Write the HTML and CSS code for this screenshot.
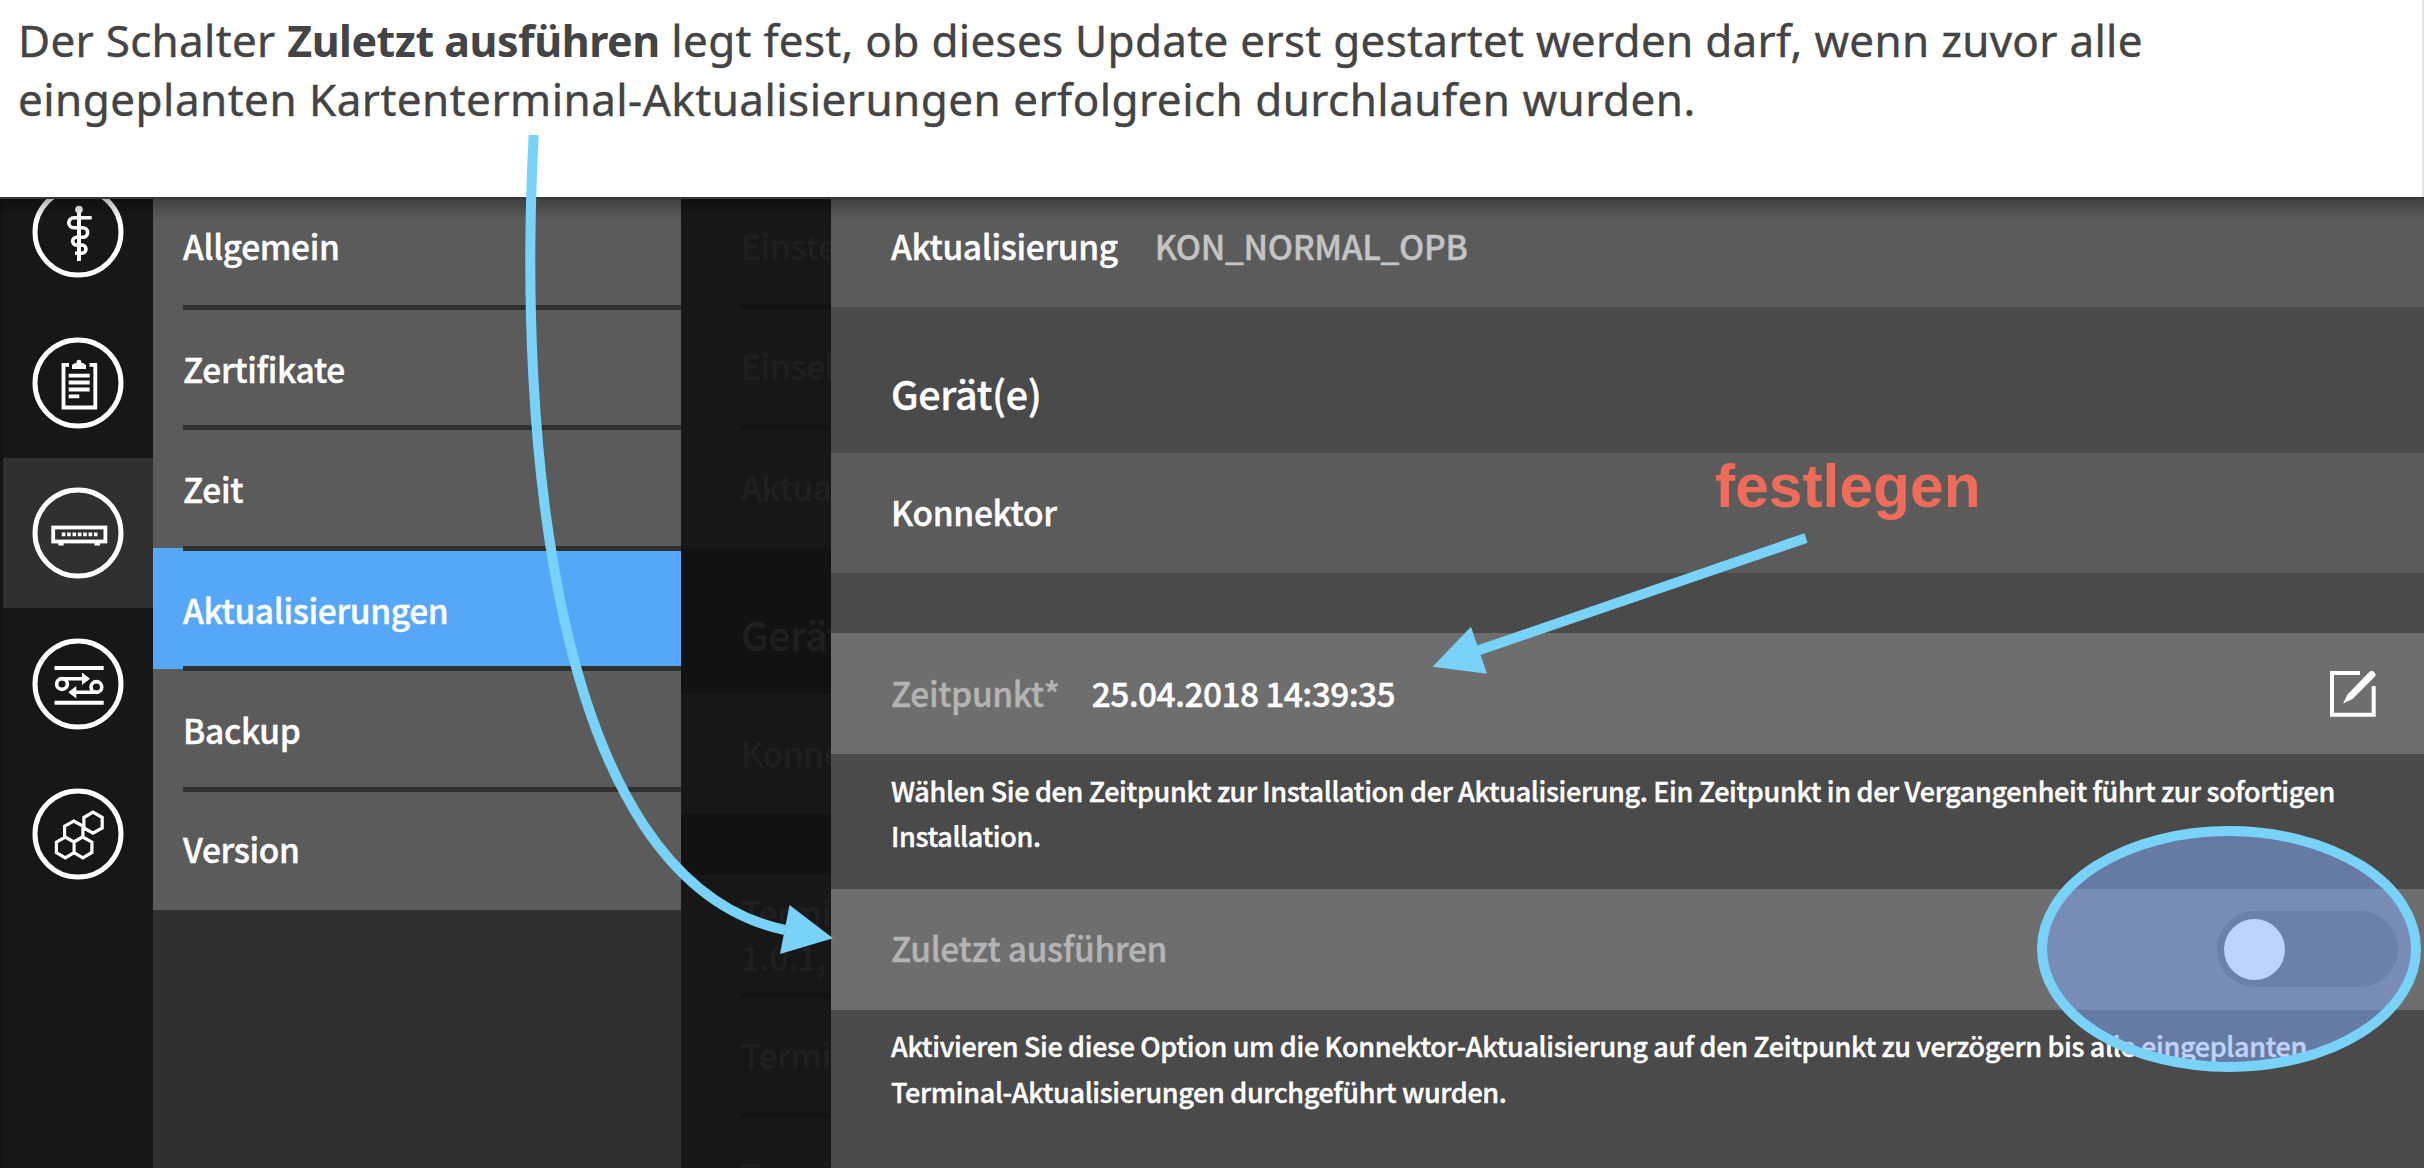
FILE: index.html
```html
<!DOCTYPE html>
<html lang="de">
<head>
<meta charset="utf-8">
<title>Aktualisierungen</title>
<link rel="stylesheet" href="styles.css">
</head>
<body>
<div class="page">
  <header class="intro">
    <p><span class="lead">Der Schalter <strong>Zuletzt ausführen</strong> legt fest, ob dieses Update erst gestartet werden darf, wenn zuvor alle</span><br>eingeplanten Kartenterminal-Aktualisierungen erfolgreich durchlaufen wurden.</p>
  </header>

  <div class="app">
    <nav class="rail">
      <a class="rail-item">
        <svg class="icon" viewBox="-46 -46 92 92"><circle r="43" stroke-width="5"/><circle class="solid" cx="1" cy="-22.5" r="3.8"/><path d="M1-21V29" stroke-width="4"/><path d="M13.7-14.3H-4.2A5 5 0 0 0-4.2-4.3H4.8A4.8 4.8 0 0 1 4.8 5.3H-1.5A3.85 3.85 0 0 0-1.5 13H3.9A4.1 4.1 0 0 1 3.9 21.2H-3" stroke-width="3.6"/></svg>
      </a>
      <a class="rail-item">
        <svg class="icon" viewBox="-46 -46 92 92"><circle r="43" stroke-width="5"/><path d="M-9-18.2H-14.5V24.5H17.3V-18.2H11.5M-9.3-7.3H11.7M-9.3-.5H11.7M-9.3 6.5H11.7M-9.3 13.3H1.3" stroke-width="3.8"/><path class="solid" d="M-6-14V-18L-3-20H-1.5Q-1.5-23.2 1-23.2T3.5-20H5L8-18V-14Z"/></svg>
      </a>
      <a class="rail-item active">
        <svg class="icon" viewBox="-46 -46 92 92"><circle r="43" stroke-width="5"/><rect x="-24.8" y="-5.5" width="52.2" height="14" stroke-width="3.8"/><path d="M-16.2 1.4H20" stroke-width="3.8" stroke-dasharray="3.6 1.75"/><path d="M-19.7 11.2H-14.3M16.5 11.2H22" stroke-width="2.5"/></svg>
      </a>
      <a class="rail-item">
        <svg class="icon" viewBox="-46 -46 92 92"><circle r="43" stroke-width="5"/><path d="M-23.5-16H25.7M-23.5 18.7H25.7" stroke-width="4"/><circle cx="-16" cy="0" r="5.4" stroke-width="3.6"/><circle cx="18.4" cy="3" r="5.4" stroke-width="3.6"/><path d="M-16-5.3H5M18.4 8.3H-3" stroke-width="3.6"/><path class="solid" d="M4-11.5 12-5.3 4 1ZM-1.7 2-9.7 8.3-1.7 14.6Z"/></svg>
      </a>
      <a class="rail-item">
        <svg class="icon" viewBox="-46 -46 92 92"><circle r="43" stroke-width="5"/><path d="M15-21.8 24.2-16.5V-6L15-.8 5.9-6V-16.5ZM-4.3-13 4.9-7.8V2.6L-4.3 8-13.4 2.6V-7.8ZM-12.7 3-3.9 8.2V18.5L-12.7 23.8-21.6 18.5V8.2ZM4.8 3 13.9 8.2V18.5L4.8 23.8-3.9 18.5V8.2Z" stroke-width="3.2"/></svg>
      </a>
    </nav>

    <nav class="menu">
      <a class="menu-item">Allgemein</a>
      <a class="menu-item">Zertifikate</a>
      <a class="menu-item">Zeit</a>
      <a class="menu-item active">Aktualisierungen</a>
      <a class="menu-item">Backup</a>
      <a class="menu-item">Version</a>
    </nav>

    <section class="dimmed">
      <div class="dim-row ruled">Einste</div>
      <div class="dim-row ruled">Einsel</div>
      <div class="dim-row">Aktua</div>
      <div class="dim-title">Gerät</div>
      <div class="dim-row">Konne</div>
      <div class="dim-gap"></div>
      <div class="dim-row ruled">Termi<br>1.0.1,</div>
      <div class="dim-row ruled">Termi</div>
      <div class="dim-row">Termi</div>
    </section>

    <main class="detail">
      <div class="row head"><span>Aktualisierung</span><span class="muted">KON_NORMAL_OPB</span></div>
      <h2 class="title">Gerät(e)</h2>
      <div class="row">Konnektor</div>
      <div class="gap"></div>
      <div class="row field">
        <span class="label">Zeitpunkt*</span><span>25.04.2018 14:39:35</span>
        <svg class="edit" viewBox="0 -2 48 48"><path d="M30 2H2V43.7H43.7V15" fill="none" stroke="#fff" stroke-width="4"/><path d="M13 32.5 17.5 23.5 39.5.8Q41.5-1 43.3.5L45 2.2Q46.5 4 44.7 5.8L22.5 28Z" fill="#fff"/></svg>
      </div>
      <p class="hint">Wählen Sie den Zeitpunkt zur Installation der Aktualisierung. Ein Zeitpunkt in der Vergangenheit führt zur sofortigen<br>Installation.</p>
      <div class="row field">
        <span class="label">Zuletzt ausführen</span>
        <span class="toggle"><span class="knob"></span></span>
      </div>
      <p class="hint">Aktivieren Sie diese Option um die Konnektor-Aktualisierung auf den Zeitpunkt zu verzögern bis alle eingeplanten<br>Terminal-Aktualisierungen durchgeführt wurden.</p>
    </main>
  </div>

  <svg class="annotations" viewBox="0 0 2424 1168">
    <path d="M533.7 135C518 430 550 880 785 930" fill="none" stroke="#79d3f9" stroke-width="10"/>
    <path d="M833 938.3 789.5 905 780 954Z" fill="#79d3f9"/>
    <path d="M1806 538 1478 650.5" fill="none" stroke="#79d3f9" stroke-width="10"/>
    <path d="M1432.6 666.7 1471 626.7 1487 673.7Z" fill="#79d3f9"/>
    <ellipse cx="2229" cy="949" rx="187" ry="118" fill="rgb(129 168 252 / .51)" stroke="#79d3f9" stroke-width="10"/>
  </svg>
  <div class="note">festlegen</div>
</div>
</body>
</html>
```
FILE: styles.css
```css
* { box-sizing: border-box; }

body {
  margin: 0;
  background: #fff;
}

.page {
  position: relative;
  display: flex;
  flex-direction: column;
  width: 2424px;
  height: 1168px;
  overflow: hidden;
}

.intro {
  flex: none;
  height: 197px;
  padding: 11px 0 0 18px;
  border-right: 2px solid #e2e2e2;
  color: #444;
  font: 44px/59px "Noto Sans", sans-serif;
  letter-spacing: .47px;
  white-space: nowrap;
  -webkit-text-stroke: .4px;
}

.intro p { margin: 0; }

.lead { letter-spacing: .3px; }

.intro strong {
  font-size: 43px;
  letter-spacing: -.5px;
  -webkit-text-stroke: 0;
}

.app {
  position: relative;
  isolation: isolate;
  flex: 1;
  display: flex;
  overflow: hidden;
  border-top: 2px solid #363837;
  background: #171717;
  color: #fff;
  font: 500 33.5px/45.2px "Noto Sans CJK SC", sans-serif;
  letter-spacing: -.34px;
  white-space: nowrap;
  -webkit-text-stroke: .4px;
}

.app::after {
  content: "";
  position: absolute;
  inset: 0 0 auto;
  height: 20px;
  background: linear-gradient(rgb(0 0 0 / .3), rgb(0 0 0 / 0));
}

.rail {
  flex: none;
  width: 153px;
  height: 1014px;
  margin-top: -42.4px;
  border-left: 3px solid #131313;
}

.rail-item {
  display: flex;
  justify-content: center;
  align-items: center;
  height: 150.6px;
}

.rail-item.active { background: #303030; }

.icon {
  width: 92px;
  height: 92px;
  fill: none;
  stroke: #fff;
}

.icon .solid {
  fill: #fff;
  stroke: none;
}

.menu {
  flex: none;
  width: 528px;
  height: 982px;
  margin-top: -12.4px;
  background: #303030;
}

.menu-item {
  position: relative;
  display: flex;
  align-items: center;
  height: 120.5px;
  padding: 2px 0 0 30px;
  background: #5b5b5b;
}

.menu-item:first-child,
.menu-item:last-child { padding: 0 0 2px 30px; }

.menu-item.active { background: #57a7f9; }

.menu-item:not(:last-child)::after,
.ruled::after {
  content: "";
  position: absolute;
  z-index: 1;
  inset: auto 0 -2.5px 30px;
  height: 5px;
  background: #303030;
}

.dimmed {
  flex: none;
  width: 150px;
  margin-top: -12.4px;
  overflow: hidden;
  background: #121212;
  color: #1f1f1f;
}

.dim-row {
  position: relative;
  display: flex;
  align-items: center;
  height: 120.3px;
  padding: 0 0 2px 60px;
  background: #171717;
}

.dimmed .ruled::after {
  left: 60px;
  background: #121212;
}

.dim-title {
  height: 146px;
  padding: 63px 0 0 60px;
  font-size: 39.5px;
}

.dim-gap { height: 61.5px; }

.detail {
  flex: 1;
  min-width: 0;
  margin-top: -12.4px;
  background: #4a4a4a;
}

.row {
  display: flex;
  align-items: center;
  height: 120.4px;
  padding: 0 26px 3px 60px;
  background: #5b5b5b;
}

.head { gap: 37px; }

.muted { color: #c4c4c4; }

.title {
  height: 145.6px;
  margin: 0;
  padding: 63px 0 0 60px;
  font-size: 39.5px;
  font-weight: 500;
}

.gap { height: 60.5px; }

.field {
  gap: 32px;
  background: #6e6e6e;
}

.field span:not(.label) { letter-spacing: -.6px; }

.label { color: #b4b4b4; }

.edit {
  width: 48px;
  height: 48px;
  margin: 2px 20px 0 auto;
}

.hint {
  height: 135.4px;
  margin: 0;
  padding: 13.8px 0 0 60px;
  font-size: 27px;
  letter-spacing: -.35px;
}

.toggle {
  display: flex;
  align-items: center;
  width: 181px;
  height: 76px;
  margin: 3px 0 0 auto;
  padding-left: 7px;
  border-radius: 38px;
  background: #565656;
}

.knob {
  width: 61px;
  height: 61px;
  border-radius: 50%;
  background: #fff;
}

.annotations {
  position: absolute;
  inset: 0;
  width: 2424px;
  height: 1168px;
}

.note {
  position: absolute;
  left: 1715px;
  top: 452px;
  color: #ee6c59;
  font: bold 60.5px/69px "Liberation Sans", sans-serif;
}
```
